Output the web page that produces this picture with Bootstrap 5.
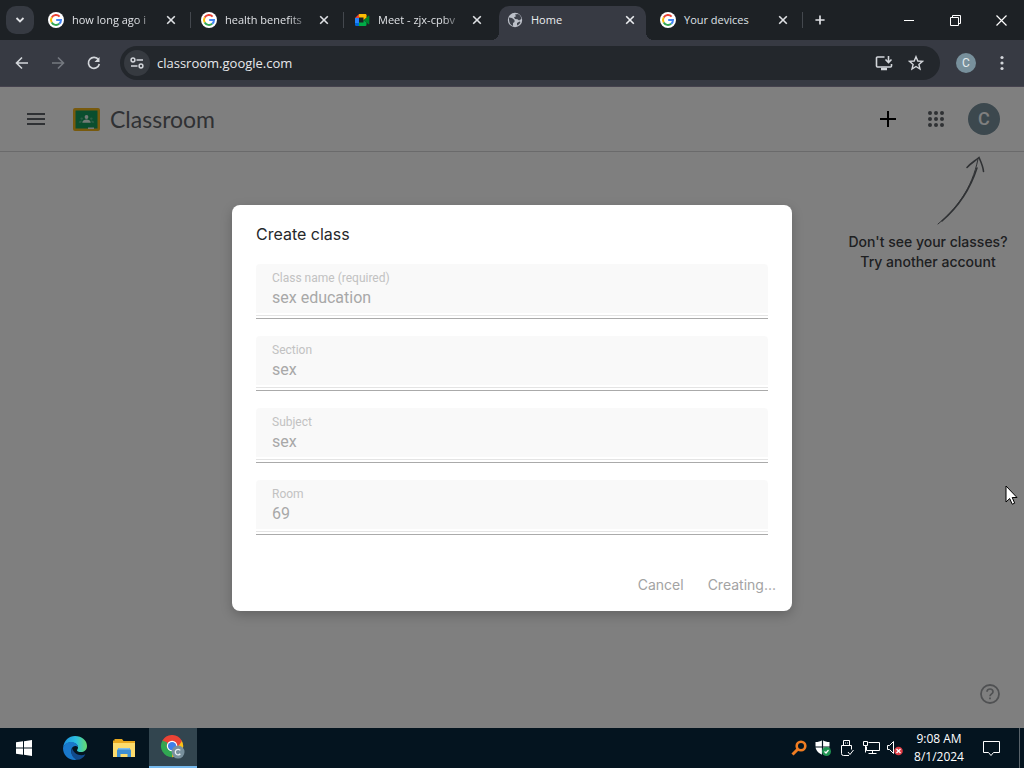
<!DOCTYPE html>
<html lang="en">
<head>
<meta charset="utf-8">
<meta name="viewport" content="width=device-width, initial-scale=1">
<title>Home - Classroom</title>
<link href="https://cdn.jsdelivr.net/npm/bootstrap@5.3.0/dist/css/bootstrap.min.css" rel="stylesheet">
<style>
  :root { --strip: #1d2125; --bar: #373a43; --omni: #23272c; }
  body { font-family: "Open Sans", sans-serif; font-size: 12px; line-height: 16px; overflow: hidden; }
  svg { display: block; flex: none; }
  .plain { border: 0; background: none; padding: 0; color: inherit; display: flex; align-items: center; justify-content: center; flex: none; }

  .tab-strip { height: 40px; background: var(--strip); color: #dfe1e5; padding-left: 6px; }
  .tab-search { width: 28px; height: 28px; border-radius: 10px; background: #363a42; margin-right: 4px; }
  .tab-item { width: 153px; height: 34px; padding: 0 15px 6px 10px; gap: 8px; flex: 0 1 auto; min-width: 0; position: relative; font-size: 11px; }
  .tab-item a { color: inherit; text-decoration: none; white-space: nowrap; flex: 1; min-width: 0; }
  .fade-end { -webkit-mask-image: linear-gradient(90deg, #000 75%, transparent); mask-image: linear-gradient(90deg, #000 75%, transparent); }
  .divided::after { content: ""; position: absolute; right: 0; top: 6px; width: 1px; height: 16px; background: #44484e; }
  .tab-live { background: var(--bar); border-radius: 10px 10px 0 0; width: 147px; margin: 0 4px 0 2px; padding: 0 11px 6px 8px; color: #eceef1; }
  .tab-live::before, .tab-live::after { content: ""; position: absolute; bottom: 0; width: 8px; height: 8px; }
  .tab-live::before { left: -8px; background: radial-gradient(circle at 0 0, transparent 8px, var(--bar) 8px); }
  .tab-live::after { right: -8px; background: radial-gradient(circle at 100% 0, transparent 8px, var(--bar) 8px); }
  .win-btn { width: 46px; height: 40px; color: #fff; }

  .tool-bar { height: 47px; background: var(--bar); padding: 0 4px; color: #d3d6db; border-bottom: 1px solid #45424e; }
  .tool-btn { width: 36px; height: 34px; }
  .omnibox { height: 34px; border-radius: 17px; background: var(--omni); margin: 0 8px; padding: 0 8px 0 4px; }
  .site-info { width: 26px; height: 26px; border-radius: 13px; background: #363a40; }
  .address { border: 0; background: none; color: #e6e8eb; font-size: 13px; line-height: 20px; padding: 0 0 0 7px; min-width: 0; outline: 0; }
  .omni-btn { width: 32px; height: 32px; }
  .mini-user { width: 20px; height: 20px; border-radius: 10px; background: #78909c; color: #e4eaed; font: 12px/20px Roboto, sans-serif; text-align: center; }

  .page { background: #fff; color: #3c4043; }
  .top-nav { height: 65px; padding: 0 16px 0 12px; border-bottom: 1px solid #d4d5d7; color: #5f6368; }
  .nav-btn { width: 48px; height: 48px; }
  .product { margin-left: 13px; gap: 10px; color: #5f6368; text-decoration: none; font: 23px/28px Lato, sans-serif; }
  .user-pic { width: 32px; height: 32px; border-radius: 16px; background: #78909c; color: #fff; font: 500 18px/32px Roboto, sans-serif; text-align: center; }
  .hint { width: 160px; margin: 2px 16px 0 auto; font: 500 14px/20px Inter, sans-serif; }
  .hint a { color: #3c4043; text-decoration: none; display: flex; flex-direction: column; align-items: center; white-space: nowrap; }
  .help { margin: auto 22px 22px auto; color: #a0a3a6; }

  .scrim { background: rgba(0, 0, 0, .5); }
  .create-box { width: 560px; max-width: 94%; border-radius: 8px; background: #fff; padding: 17px 24px 8px; box-shadow: 0 4px 12px rgba(0, 0, 0, .22); }
  .create-box h1 { font: 16px/24px Inter, sans-serif; color: #26282b; margin: 0 0 18px; }
  .fields { gap: 17px; }
  .field { height: 55px; padding: 5px 16px 0; border-bottom: 1px solid #aaa; background: linear-gradient(#e4e4e4, #e4e4e4) 0 51px / 100% 1px no-repeat, linear-gradient(#f9f9f9, #f9f9f9) 0 0 / 100% 49px no-repeat; border-radius: 4px 4px 0 0; font-family: Roboto, sans-serif; }
  .field label { display: block; font-size: 12px; line-height: 18px; color: #c2c2c2; }
  .field input { display: block; width: 100%; border: 0; background: none; padding: 0; font-size: 16px; line-height: 22px; height: 22px; color: #a8a8a8; }
  .actions { gap: 8px; margin: 32px -16px 0 0; }
  .actions button { height: 36px; padding: 0 8px; font: 14px/20px Inter, sans-serif; color: #a3a3a3; }

  .taskbar { height: 40px; background: #04141f; color: #fff; }
  .task { width: 48px; height: 40px; }
  .launchers { gap: 1px; }
  .start { margin-right: 2px; }
  .running { background: #32454f; border-bottom: 2px solid #76b9ed; }
  .tray { width: 24px; height: 40px; }
  .clock { width: 64px; font-size: 12px; line-height: 18px; text-align: center; white-space: nowrap; }
  .notes { width: 40px; height: 40px; margin-right: 8px; }
  .peek { width: 5px; height: 40px; border-left: 1px solid #59636a; }
  .pointer { left: 1005px; top: 485px; z-index: 5; pointer-events: none; }
</style>
</head>
<body>
<svg width="0" height="0" class="position-absolute" aria-hidden="true">
  <symbol id="g" viewBox="0 0 16 16">
    <circle cx="8" cy="8" r="8" fill="#fff"/>
    <g fill="none" stroke-width="2">
      <path d="M11.6 4.6A5 5 0 0 0 3.7 5.5" stroke="#ea4335"/>
      <path d="M3.7 5.5A5 5 0 0 0 3.7 10.5" stroke="#fbbc05"/>
      <path d="M3.7 10.5A5 5 0 0 0 11.2 11.8" stroke="#34a853"/>
      <path d="M11.2 11.8A5 5 0 0 0 13 8H8.2" stroke="#4285f4"/>
    </g>
  </symbol>
  <symbol id="x" viewBox="0 0 10 10"><path d="M1.2 1.2l7.6 7.6M8.8 1.2L1.2 8.8" stroke="currentColor" stroke-width="1.6" fill="none"/></symbol>
</svg>

<div class="d-flex flex-column vh-100 position-relative">
  <nav class="tab-strip d-flex align-items-center" aria-label="Tabs">
    <button class="plain tab-search" aria-label="Search tabs"><svg width="10" height="8" viewBox="0 0 10 8"><path d="M1.5 2L5 5.5 8.5 2" fill="none" stroke="currentColor" stroke-width="1.8"/></svg></button>
    <div class="tab-item divided d-flex align-items-center align-self-end"><svg width="16" height="16"><use href="#g"/></svg><a href="#" class="fade-end">how long ago i</a><button class="plain" aria-label="Close tab"><svg width="10" height="10"><use href="#x"/></svg></button></div>
    <div class="tab-item divided d-flex align-items-center align-self-end"><svg width="16" height="16"><use href="#g"/></svg><a href="#" class="fade-end">health benefits</a><button class="plain" aria-label="Close tab"><svg width="10" height="10"><use href="#x"/></svg></button></div>
    <div class="tab-item d-flex align-items-center align-self-end">
      <svg width="16" height="16" viewBox="0 0 16 16"><path d="M1 6l4-4v4z" fill="#ea4335"/><path d="M5 2h6.5v3.5H5z" fill="#fbbc04"/><path d="M1 6h4v5H1z" fill="#2684fc"/><path d="M1 11h4v3H2.2A1.2 1.2 0 0 1 1 12.8z" fill="#0066da"/><path d="M5 10.500h4.500V8l3 2.500v2.300a1.200 1.200 0 0 1-1.200 1.200H5z" fill="#00ac47"/><path d="M9.500 8l5-4.300c.3-.2.800 0 .8.400v7.800c0 .4-.5.600-.8.400z" fill="#00832d"/><path d="M9.500 5.500V8l3-2.500V3.200A1.200 1.200 0 0 0 11.300 2H10z" fill="#ffba00"/></svg>
      <a href="#" class="fade-end">Meet - zjx-cpbv</a><button class="plain" aria-label="Close tab"><svg width="10" height="10"><use href="#x"/></svg></button></div>
    <div class="tab-item tab-live d-flex align-items-center align-self-end">
      <svg width="16" height="16" viewBox="0 0 16 16"><circle cx="8" cy="8" r="7.200" fill="#bcc0c8"/><path d="M2 5.500l3 .5 2.500 2v2L6 11v3C3.500 13 1.800 11 2 5.500zM8 2.500l3-.6c2.500 1.300 3.300 3.300 3.300 5L12 8.500l-1.500-1.200L8 7 7 5.200l2-1zM10 11l2.500-1.500 1 .5c-.7 1.700-2 2.900-3.500 3.500z" fill="#3f434c"/></svg>
      <a href="#">Home</a><button class="plain" aria-label="Close tab"><svg width="10" height="10"><use href="#x"/></svg></button></div>
    <div class="tab-item divided d-flex align-items-center align-self-end"><svg width="16" height="16"><use href="#g"/></svg><a href="#">Your devices</a><button class="plain" aria-label="Close tab"><svg width="10" height="10"><use href="#x"/></svg></button></div>
    <button class="plain tab-new ms-2 ps-1" aria-label="New tab"><svg width="10" height="10" viewBox="0 0 12 12"><path d="M6 .5v11M.5 6h11" stroke="currentColor" stroke-width="2"/></svg></button>
    <div class="d-flex ms-auto">
      <button class="plain win-btn" aria-label="Minimize"><svg width="10" height="10"><path d="M0 5.500h10" stroke="#fff"/></svg></button>
      <button class="plain win-btn" aria-label="Restore"><svg width="11" height="11" fill="none" stroke="#fff"><path d="M.5 2.500h8v8h-8zM2.500 2.500v-2h8v8h-2"/></svg></button>
      <button class="plain win-btn" aria-label="Close"><svg width="11" height="11"><path d="M.5.500l10 10M10.500.500l-10 10" stroke="#fff" stroke-width="1.200"/></svg></button>
    </div>
  </nav>

  <div class="tool-bar d-flex align-items-center">
    <button class="plain tool-btn" aria-label="Back"><svg width="14" height="14" viewBox="0 0 14 14" fill="none" stroke="currentColor" stroke-width="1.600"><path d="M13 7H2M7 1.500L1.500 7 7 12.500"/></svg></button>
    <button class="plain tool-btn" aria-label="Forward"><svg width="14" height="14" viewBox="0 0 14 14" fill="none" stroke="#757980" stroke-width="1.600"><path d="M1 7h11M7 1.500L12.500 7 7 12.500"/></svg></button>
    <button class="plain tool-btn" aria-label="Reload"><svg width="14" height="14" viewBox="0 0 14 14" fill="none" stroke="currentColor" stroke-width="1.700"><path d="M12.300 8A5.500 5.500 0 1 1 11.500 3.800"/><path d="M12.500 1v5h-5z" fill="currentColor" stroke="none"/></svg></button>
    <div class="omnibox d-flex align-items-center flex-grow-1">
      <button class="plain site-info" aria-label="Site information"><svg width="14" height="12" viewBox="0 0 14 12" fill="none" stroke="currentColor" stroke-width="1.500"><circle cx="3" cy="3" r="1.900"/><path d="M6.500 3H13M1 9h6.500"/><circle cx="11" cy="9" r="1.900"/></svg></button>
      <input class="address flex-grow-1" aria-label="Address" value="classroom.google.com">
      <button class="plain omni-btn" aria-label="Install app"><svg width="18" height="16" viewBox="0 0 18 16" fill="none" stroke="currentColor" stroke-width="1.600"><path d="M9.500 2H2.500a1 1 0 0 0-1 1v8a1 1 0 0 0 1 1h13a1 1 0 0 0 1-1V9"/><path d="M13.500 1v6M10.500 4.500l3 3 3-3"/><path d="M6 14h6" stroke-width="2.500"/></svg></button>
      <button class="plain omni-btn" aria-label="Bookmark"><svg width="16" height="16" viewBox="0 0 16 16" fill="none" stroke="currentColor" stroke-width="1.400"><path d="M8 1.700l1.800 4.300 4.700.4-3.600 3 1.100 4.600L8 11.500 4 14l1.100-4.600-3.600-3L6.200 6z"/></svg></button>
    </div>
    <button class="plain tool-btn" aria-label="Profile"><span class="mini-user">C</span></button>
    <button class="plain tool-btn" aria-label="Menu"><svg width="4" height="16" fill="currentColor"><circle cx="2" cy="2.500" r="1.600"/><circle cx="2" cy="8" r="1.600"/><circle cx="2" cy="13.500" r="1.600"/></svg></button>
  </div>

  <main class="page d-flex flex-column flex-grow-1 position-relative">
    <header class="top-nav d-flex align-items-center">
      <button class="plain nav-btn" aria-label="Main menu"><svg width="18" height="12"><path d="M0 1h18M0 6h18M0 11h18" stroke="currentColor" stroke-width="2"/></svg></button>
      <a href="#" class="product d-flex align-items-center">
        <svg width="27" height="23" viewBox="0 0 27 23"><rect width="27" height="23" rx="2" fill="#f0b41c"/><rect x="2.500" y="2.500" width="22" height="18" fill="#159d5c"/><circle cx="13.500" cy="9" r="1.900" fill="#e7f5ee"/><path d="M9.300 14.800c0-2.300 2.300-3.200 4.200-3.200s4.200.9 4.200 3.200z" fill="#e7f5ee"/><circle cx="8.700" cy="10.600" r="1.200" fill="#57bb8a"/><circle cx="18.300" cy="10.600" r="1.200" fill="#57bb8a"/><path d="M5.800 14.800c0-1.700 1.500-2.400 3-2.400l-.6 2.400zM21.200 14.800c0-1.700-1.500-2.400-3-2.400l.6 2.400z" fill="#57bb8a"/><path d="M15 19.500h6v1.500h-6z" fill="#f1f1f1"/></svg>
        <span>Classroom</span></a>
      <button class="plain nav-btn ms-auto" aria-label="Create or join a class"><svg width="16" height="16"><path d="M8 0v16M0 8h16" stroke="#000" stroke-width="2"/></svg></button>
      <button class="plain nav-btn" aria-label="Google apps"><svg width="16" height="16" fill="currentColor"><circle cx="2" cy="2" r="2"/><circle cx="8" cy="2" r="2"/><circle cx="14" cy="2" r="2"/><circle cx="2" cy="8" r="2"/><circle cx="8" cy="8" r="2"/><circle cx="14" cy="8" r="2"/><circle cx="2" cy="14" r="2"/><circle cx="8" cy="14" r="2"/><circle cx="14" cy="14" r="2"/></svg></button>
      <button class="plain nav-btn" aria-label="Account"><span class="user-pic">C</span></button>
    </header>
    <div class="hint">
      <svg width="160" height="78" viewBox="0 0 160 78" fill="none" stroke="#5f6368" stroke-linecap="round"><path d="M90 70C108 55 124 35 130 5" stroke-width="1"/><path d="M94 67C109 54 122 36 129 14" stroke-width="1.500"/><path d="M119 13.500C123 9 127 7 131 3.500 133 8 135 12 135.500 17.500" stroke-width="1.600"/></svg>
      <a href="#"><span>Don't see your classes?</span><span>Try another account</span></a>
    </div>
    <button class="plain help" aria-label="Help"><svg width="24" height="24" viewBox="0 0 24 24" fill="none" stroke="currentColor"><circle cx="12" cy="12" r="9" stroke-width="1.800"/><path d="M9 9.800C9 8 10.300 7 12 7s3 1 3 2.700c0 2-3 2.300-3 4.600" stroke-width="1.700"/><path d="M11.100 15.500h1.800v1.800h-1.800z" fill="currentColor" stroke="none"/></svg></button>

    <div class="scrim position-absolute top-0 start-0 w-100 h-100 d-flex align-items-center justify-content-center">
      <form class="create-box" role="dialog" aria-labelledby="dlg">
        <h1 id="dlg">Create class</h1>
        <div class="fields d-flex flex-column">
          <div class="field"><label for="f1">Class name (required)</label><input id="f1" value="sex education" disabled></div>
          <div class="field"><label for="f2">Section</label><input id="f2" value="sex" disabled></div>
          <div class="field"><label for="f3">Subject</label><input id="f3" value="sex" disabled></div>
          <div class="field"><label for="f4">Room</label><input id="f4" value="69" disabled></div>
        </div>
        <div class="actions d-flex justify-content-end">
          <button type="button" class="plain" disabled>Cancel</button>
          <button type="submit" class="plain" disabled>Creating...</button>
        </div>
      </form>
    </div>
  </main>

  <footer class="taskbar d-flex align-items-center">
    <div class="launchers d-flex">
      <button class="plain task start" aria-label="Start"><svg width="16" height="16" fill="#fff"><path d="M0 2.300l7-1v6.200H0zM8 1.200L16 0v7.500H8zM0 8.500h7v6.200l-7-1zM8 8.500h8V16l-8-1.200z"/></svg></button>
      <button class="plain task" aria-label="Edge"><svg width="24" height="24" viewBox="0 0 24 24"><defs><linearGradient id="e1"><stop stop-color="#1b8fe0"/><stop offset=".55" stop-color="#2cbfe0"/><stop offset="1" stop-color="#66dc6b"/></linearGradient></defs><path d="M0 12C1 4 6 0 12 0c7 0 12 4.500 12 10 0 4-3 6-6 6-2.500 0-4-.9-4-1.800 0-.7 1-1.200 1-3 0-2.500-3-4.700-6.500-4.700C4.500 6.500 1 8.500 0 12z" fill="url(#e1)"/><path d="M0 12c1-4 4.500-6 8.500-6C12 6 15 8.500 15 11.200 13 9 9.500 10 8.500 13c-1 3.500 1 8 5.500 10.800C6 25 0 19.500 0 12z" fill="#1978cb"/><path d="M9 12c-2 5 2 10 7 10 2.500 0 5-1.500 6.300-3.700-5 2.200-11 .2-13.300-6.300zM8.600 13c-1.500 5 1.500 9.500 5.500 10.800 3 .2 6.500-2 8.200-5.300-5.500 3-12 .5-13.700-5.500z" fill="#114a8b"/></svg></button>
      <button class="plain task" aria-label="File Explorer"><svg width="22" height="18" viewBox="0 0 22 18"><path d="M0 1.500h1.500V0H9l1.500 2H22v15H0z" fill="#e9a91f"/><path d="M0 4h22v14H0z" fill="#fddc6d"/><path d="M4 18v-6.500L5.500 9h11l1.500 2.500V18h-3.500v-3h-7v3z" fill="#3f8fd2"/><path d="M5.500 9h11l.6 1.500H5z" fill="#80bfee"/></svg></button>
      <button class="plain task running" aria-label="Chrome"><svg width="26" height="24" viewBox="0 0 26 26"><path d="M12 12L1.600 6A12 12 0 0 1 22.400 6z" fill="#ea4335"/><path d="M12 12l10.400-6A12 12 0 0 1 12 24z" fill="#fbc116"/><path d="M12 12v12A12 12 0 0 1 1.600 6z" fill="#31a852"/><path d="M12 6.500h10.700L17 15zM7.200 14.800L1.600 6l9.400 1z" fill="#ea4335"/><path d="M7.300 14.700L1.600 6l5 2z" fill="#31a852"/><circle cx="12" cy="12" r="5.700" fill="#fff"/><circle cx="12" cy="12" r="4.500" fill="#3f7fe8"/><circle cx="18.500" cy="18.500" r="7" fill="#78909c"/><path d="M20.900 16.700a3 3 0 1 0 0 3.600" fill="none" stroke="#e8eef1" stroke-width="1.400"/></svg></button>
    </div>
    <div class="d-flex align-items-center ms-auto">
      <button class="plain tray" aria-label="Search tool"><svg width="16" height="16" fill="none" stroke="#f07d22"><circle cx="10" cy="6" r="4.300" stroke-width="2.600"/><path d="M7 9l-5.500 5.500" stroke-width="3"/></svg></button>
      <button class="plain tray" aria-label="Security"><svg width="16" height="16" viewBox="0 0 16 16"><path d="M7.500 0C5.500 1.500 3 2 .5 2v4.500C.5 10.500 4 13.500 7.500 15c3.500-1.500 7-4.500 7-8.500V2C12 2 9.500 1.500 7.500 0z" fill="#fff"/><path d="M7.500 0v15M0 7h15" stroke="#04141f" stroke-width="1.200"/><circle cx="11.500" cy="11.500" r="4.500" fill="#219553"/><path d="M9.500 11.500l1.500 1.500 2.500-3" fill="none" stroke="#fff" stroke-width="1.200"/></svg></button>
      <button class="plain tray" aria-label="USB"><svg width="14" height="16" fill="none" stroke="#fff"><path d="M3.500 5.500v-5h6v5M9 15.500H3.500q-2 0-2-2v-8h10v4M5.500 2.500v1M7.500 2.500v1M8 12l2 2.500 3.500-4.500"/></svg></button>
      <button class="plain tray" aria-label="Network"><svg width="17" height="16" fill="none" stroke="#fff"><path d="M5.500 2.500h11v8h-13v-4M.5 1.500h4v4h-4zM2.500 5.500v7M9.500 10.500v3M5.500 13.500h8"/></svg></button>
      <button class="plain tray" aria-label="Volume muted"><svg width="16" height="16" fill="none" stroke="#fff"><path d="M.5 5.500h2l4-4v12l-4-4h-2z"/><circle cx="11.500" cy="11" r="4.300" fill="#df3c45" stroke="none"/><path d="M9.500 9l4 4M13.500 9l-4 4" stroke-width="1.300"/></svg></button>
      <div class="clock">9:08 AM<br>8/1/2024</div>
      <button class="plain notes" aria-label="Notifications"><svg width="17" height="17" fill="none" stroke="#fff"><path d="M.5 1.500h16v11h-6l-2.500 3-2.500-3h-5z"/></svg></button>
      <button class="plain peek" aria-label="Show desktop"></button>
    </div>
  </footer>

  <svg class="pointer position-absolute" width="13" height="21" viewBox="0 0 13 21"><path d="M1 1v16l3.700-3.500 2.500 5.700 2.500-1-2.500-5.700H12z" fill="#fff" stroke="#000"/></svg>
</div>
<script src="https://cdn.jsdelivr.net/npm/bootstrap@5.3.0/dist/js/bootstrap.bundle.min.js"></script>
</body>
</html>
